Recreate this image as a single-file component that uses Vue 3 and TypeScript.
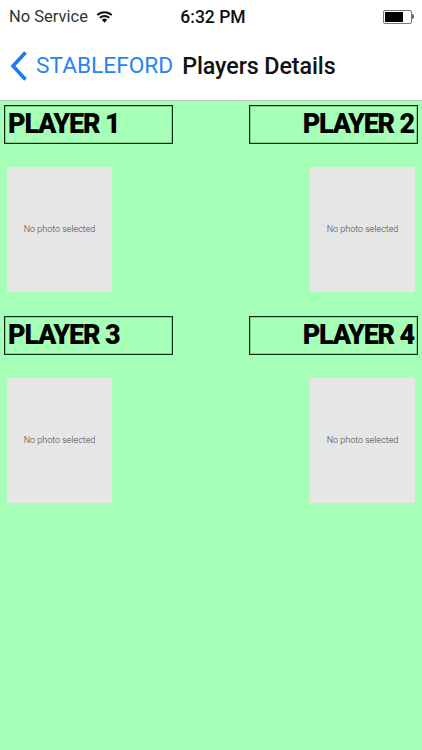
<script setup lang="ts">
interface Player { name: string; side: 'left' | 'right' }
const players: Player[] = [
  { name: 'PLAYER 1', side: 'left' },
  { name: 'PLAYER 2', side: 'right' },
  { name: 'PLAYER 3', side: 'left' },
  { name: 'PLAYER 4', side: 'right' },
]
</script>

<template>
  <div class="screen">
    <header class="top">
      <div class="status">
        <div class="status-left">
          <span>No Service</span>
          <svg class="wifi" width="17" height="13" viewBox="0 0 17 13">
            <path d="M0.6 4.4a11.4 11.4 0 0 1 15.8 0l-1.3 1.4a9.5 9.5 0 0 0-13.2 0z" fill="#111"/>
            <path d="M3.2 7.1a7.7 7.7 0 0 1 10.6 0l-1.3 1.4a5.8 5.8 0 0 0-8 0z" fill="#111"/>
            <path d="M5.8 9.8a4 4 0 0 1 5.4 0L8.5 12.7z" fill="#111"/>
          </svg>
        </div>
        <span class="time">6:32 PM</span>
        <div class="battery">
          <div class="battery-body"><div class="battery-fill"></div></div>
          <div class="battery-tip"></div>
        </div>
      </div>
      <nav class="nav">
        <svg class="chevron" width="18" height="32" viewBox="0 0 18 32">
          <path d="M15.5 2.5 3 16l12.5 13.5" fill="none" stroke="#1a7cf0" stroke-width="3.6"/>
        </svg>
        <span class="back">STABLEFORD</span>
        <span class="title">Players Details</span>
      </nav>
    </header>
    <main class="grid">
      <section v-for="p in players" :key="p.name" class="player" :class="p.side">
        <div class="name">{{ p.name }}</div>
        <div class="photo"><span>No photo selected</span></div>
      </section>
    </main>
  </div>
</template>

<style>
html, body { margin: 0; padding: 0; }
</style>

<style scoped>
.screen {
  width: 422px;
  height: 750px;
  background: #a6ffb6;
  display: flex;
  flex-direction: column;
  overflow: hidden;
  font-family: "Roboto", "Liberation Sans", sans-serif;
}
.top {
  height: 100px;
  background: #fff;
  border-bottom: 1px solid #b4c4b6;
  display: flex;
  flex-direction: column;
  flex-shrink: 0;
}
.status {
  height: 33px;
  padding: 0 8px 0 9px;
  display: grid;
  grid-template-columns: 1fr auto 1fr;
  align-items: center;
  font-size: 16.5px;
  color: #333;
}
.status-left { display: flex; align-items: center; gap: 8px; }
.wifi { display: block; }
.time { color: #111; font-size: 17.5px; font-weight: 500; padding-left: 3px; }
.battery { display: flex; align-items: center; justify-self: end; }
.battery-body {
  width: 29px;
  height: 14px;
  box-sizing: border-box;
  border: 1px solid #777;
  border-radius: 2px;
  padding: 1px;
}
.battery-fill { width: 18px; height: 100%; background: #000; }
.battery-tip { width: 2px; height: 5px; background: #666; border-radius: 0 2px 2px 0; }
.nav {
  flex: 1;
  display: flex;
  align-items: center;
  padding: 0 0 1px 10px;
  margin-top: -1px;
}
.chevron { display: block; margin-right: 8px; }
.back { color: #2a84ee; font-size: 22.7px; margin-right: 9px; }
.title { color: #111; font-size: 23.3px; font-weight: 500; letter-spacing: -0.1px; }
.grid {
  display: grid;
  grid-template-columns: 1fr 1fr;
  row-gap: 24px;
  padding: 4px 4px 0;
}
.player { display: flex; flex-direction: column; }
.player.left { align-items: flex-start; }
.player.right { align-items: flex-end; }
.name {
  width: 169px;
  height: 39px;
  box-sizing: border-box;
  border: 1px solid #0e2a17;
  box-shadow: inset 0 0 0 1px rgba(20, 60, 32, 0.25);
  padding: 0 3px 0 3px;
  font-size: 27px;
  font-weight: 900;
  line-height: 37px;
  letter-spacing: -1.2px;
  color: #000;
}
.player.right .name { text-align: right; }
.photo {
  width: 105px;
  height: 125px;
  margin: 23px 3px 0;
  padding-bottom: 2px;
  box-sizing: border-box;
  background: #e6e6e6;
  display: flex;
  align-items: center;
  justify-content: center;
  font-size: 9px;
  font-weight: 300;
  color: #444;
  white-space: nowrap;
}
</style>
